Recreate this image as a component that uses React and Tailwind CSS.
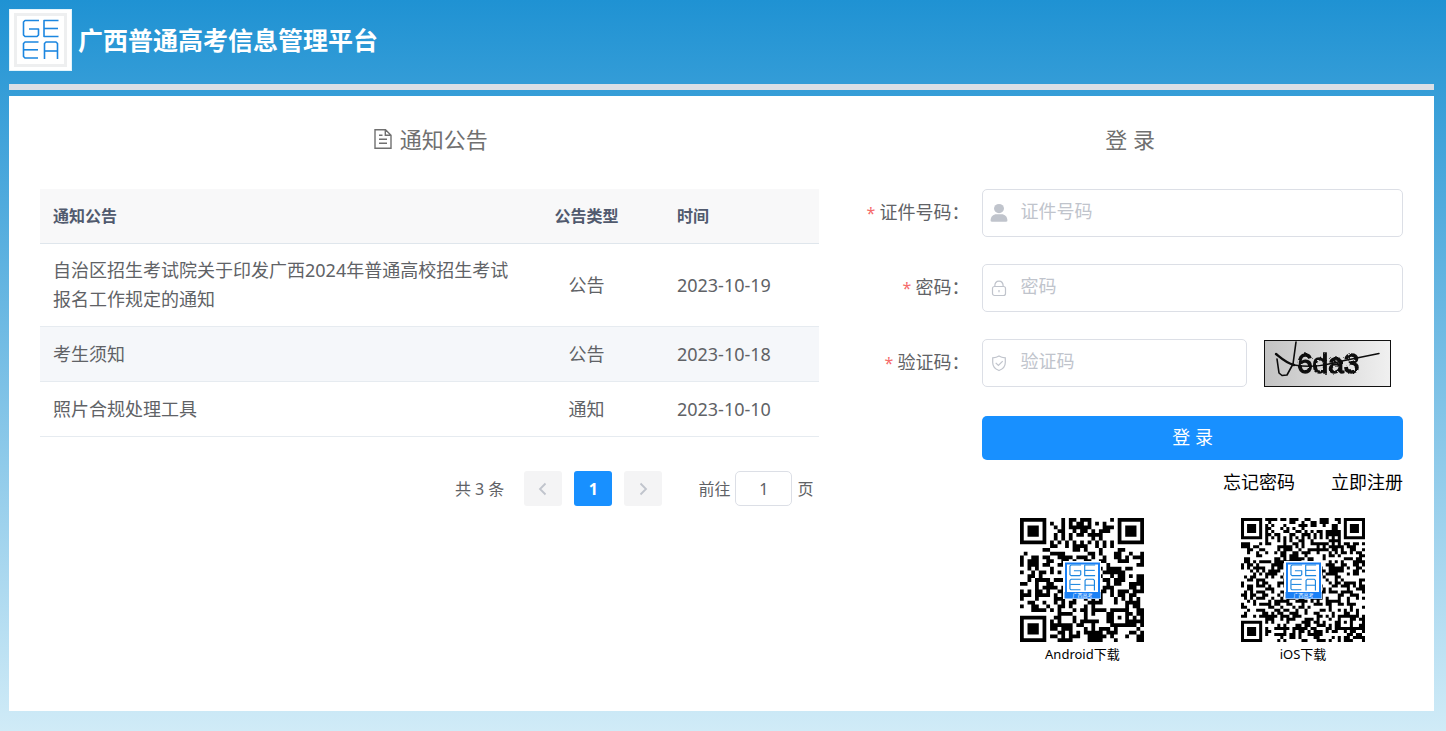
import { useState } from "react";

const NOTICES = [
  {
    title: "自治区招生考试院关于印发广西2024年普通高校招生考试报名工作规定的通知",
    type: "公告",
    date: "2023-10-19",
  },
  { title: "考生须知", type: "公告", date: "2023-10-18" },
  { title: "照片合规处理工具", type: "通知", date: "2023-10-10" },
];

// Strokes of the GEEA mark, shared by the header logo and the QR badges
function Mark() {
  return (
    <g fill="none" stroke="#1b86e0" strokeWidth="1.6" strokeLinejoin="round">
      <polyline points="30,11.5 16,11.5 14.5,13 14.5,26 16,27.5 28,27.5 29.5,26 29.5,20 20,20" />
      <polyline points="49.5,11.5 35,11.5 35,27.5 49.5,27.5" />
      <line x1="35" y1="19.5" x2="49" y2="19.5" />
      <polyline points="29.5,33 16,33 14.5,34.5 14.5,47.5 16,49 29,49" />
      <line x1="15" y1="40.8" x2="29" y2="40.8" />
      <polyline points="35.5,50 35.5,34.5 37,33 47,33 48.5,34.5 48.5,50" />
      <line x1="35.5" y1="42" x2="48.5" y2="42" />
    </g>
  );
}

function Logo() {
  return (
    <svg viewBox="0 0 63 62" className="h-[62px] w-[63px] shrink-0" aria-hidden="true">
      <rect width="63" height="62" fill="#fff" />
      <rect x="0.5" y="0.5" width="62" height="61" fill="none" stroke="#e3f4fb" />
      <rect x="6.5" y="5.5" width="50" height="51" fill="none" stroke="#eeeff0" strokeWidth="3" />
      <Mark />
    </svg>
  );
}

function finderAt(x, y, fx, fy) {
  const dx = x - fx;
  const dy = y - fy;
  if (dx < -1 || dy < -1 || dx > 7 || dy > 7) return null;
  const ring = Math.max(Math.abs(dx - 3), Math.abs(dy - 3));
  return ring === 3 || ring <= 1;
}

function buildModules(size, seed) {
  let s = seed;
  const next = () => {
    s = (s * 1103515245 + 12345) % 2147483648;
    return s / 2147483648;
  };
  let d = "";
  for (let y = 0; y < size; y++) {
    for (let x = 0; x < size; x++) {
      let on = next() > 0.49;
      if (x === 6) on = y % 2 === 0;
      if (y === 6) on = x % 2 === 0;
      // alignment pattern
      const a = Math.max(Math.abs(x - (size - 7)), Math.abs(y - (size - 7)));
      if (a <= 2) on = a !== 1;
      const f =
        finderAt(x, y, 0, 0) ?? finderAt(x, y, size - 7, 0) ?? finderAt(x, y, 0, size - 7);
      if (f !== null) on = f;
      if (on) d += `M${x} ${y}h1v1h-1z`;
    }
  }
  return d;
}

const ANDROID_MODULES = buildModules(33, 20231);
const IOS_MODULES = buildModules(41, 77123);

function QrCode({ size, modules, label }) {
  return (
    <figure className="flex flex-col items-center">
      <svg viewBox="0 0 124 124" className="size-[124px]" role="img" aria-label={label}>
        <path d={modules} transform={`scale(${124 / size})`} fill="#000" />
        <rect x="43" y="43" width="38" height="38" fill="#fff" />
        <rect x="46" y="45.5" width="33" height="33" fill="#fff" stroke="#1a80f5" strokeWidth="2" />
        <g transform="translate(39.5 39.5) scale(0.72 0.66)">
          <Mark />
        </g>
        <rect x="44.5" y="74" width="36" height="6.5" fill="#1a80f5" />
        <text x="62.5" y="79" fontSize="5" fill="#fff" textAnchor="middle">
          广西高考
        </text>
      </svg>
      <figcaption className="mt-[2px] text-[13px] leading-5 text-black">{label}</figcaption>
    </figure>
  );
}

function Captcha() {
  return (
    <svg
      viewBox="0 0 127 47"
      className="h-[47px] w-[127px]"
      fontFamily="Liberation Sans, sans-serif"
    >
      <defs>
        <linearGradient id="captcha-bg" x1="0" x2="1" y1="0" y2="0">
          <stop offset="0" stopColor="#c3c3c3" />
          <stop offset="1" stopColor="#f0f0f0" />
        </linearGradient>
        <filter id="captcha-soft">
          <feTurbulence type="fractalNoise" baseFrequency="0.25" numOctaves="2" result="n" />
          <feDisplacementMap in="SourceGraphic" in2="n" scale="3" result="d" />
          <feGaussianBlur in="d" stdDeviation="0.5" />
        </filter>
      </defs>
      <rect x="0.5" y="0.5" width="126" height="46" fill="url(#captcha-bg)" stroke="#111" />
      <text
        x="33"
        y="33"
        fontSize="28"
        fill="#0c0c0c"
        stroke="#0c0c0c"
        strokeWidth="1.4"
        filter="url(#captcha-soft)"
      >
        6da3
      </text>
      <g fill="none" stroke="#0c0c0c" strokeLinecap="round" strokeLinejoin="round">
        <path d="M12 14C17 18 22 23 30 25" strokeWidth="2.4" />
        <path d="M30 25C50 28 62 25 78 21L115 13.5" strokeWidth="1.5" />
        <path d="M13 19L15 33L18 35.5L23 35L29 24L32 2" strokeWidth="1.6" />
      </g>
    </svg>
  );
}

function DocumentIcon() {
  return (
    <svg viewBox="0 0 18 20" className="h-5 w-[18px]" fill="none" stroke="currentColor" strokeWidth="1.4">
      <path d="M1 .8h10.500L17 6.300V19.200H1zM11.300 1v5.200H17M5 6.300h3.500M5 10.300h8M5 14.300h8" />
    </svg>
  );
}

function UserIcon() {
  return (
    <svg viewBox="0 0 18 18" className="size-[18px]" fill="currentColor">
      <ellipse cx="9" cy="4.600" rx="5" ry="4.600" />
      <path d="M.6 16.500c0-4 2.500-6.300 6-6.300h4.800c3.500 0 6 2.300 6 6.300 0 .8-.5 1.200-1.200 1.200H1.800C1.100 17.700.6 17.300.6 16.500z" />
    </svg>
  );
}

function LockIcon() {
  return (
    <svg viewBox="0 0 18 18" className="size-[18px]" fill="none" stroke="currentColor" strokeWidth="1.2">
      <rect x="2.500" y="7.500" width="13" height="9" rx="2" />
      <path d="M4.800 7.300C4.800 4 6.500 2.200 9 2.200S13.200 4 13.200 7.300M9 11v2.200" />
    </svg>
  );
}

function ShieldIcon() {
  return (
    <svg viewBox="0 0 18 18" className="size-[18px]" fill="none" stroke="currentColor" strokeWidth="1.2">
      <path d="M9 2C7.200 3.200 5 3.700 2.700 3.800V8.500c0 4 2.300 6.500 6.300 8 4-1.500 6.300-4 6.300-8V3.800C13 3.700 10.800 3.200 9 2z" />
      <path d="M5.700 8.800l2.700 2.700 4.300-4.300" />
    </svg>
  );
}

function Chevron({ flip }) {
  return (
    <svg
      viewBox="0 0 16 16"
      className={flip ? "size-4 rotate-180" : "size-4"}
      fill="none"
      stroke="currentColor"
      strokeWidth="1.8"
    >
      <path d="M10.500 2.500L5 8l5.500 5.500" />
    </svg>
  );
}

function Field({ id, label, type = "text", icon, children }) {
  return (
    <div className="flex">
      <label
        htmlFor={id}
        className="w-[125px] shrink-0 pr-[13px] text-right text-lg leading-[46px] whitespace-nowrap text-[#606266]"
      >
        <span className="mr-1 text-base text-[#f56c6c]">*</span>
        {label}：
      </label>
      <div className="relative min-w-0 flex-1">
        <input
          id={id}
          type={type}
          placeholder={label}
          className="h-12 w-full rounded-[5px] border border-[#dcdfe6] bg-white pb-1 pl-[37px] text-lg text-[#606266] outline-none placeholder:text-[#c0c4cc]"
        />
        <span className="absolute inset-y-0 left-2 flex items-center text-[#c0c4cc]">{icon}</span>
      </div>
      {children}
    </div>
  );
}

function NoticeTable() {
  return (
    <table className="w-full table-fixed border-separate border-spacing-0 text-left text-[#606266]">
      <thead className="bg-[#f8f8f9] text-base text-[#515a6e]">
        <tr>
          <th className="h-[55px] w-[62%] border-b border-[#dfe6ec] pl-[13px]">通知公告</th>
          <th className="w-[16%] border-b border-[#dfe6ec] pl-[2px] text-center">公告类型</th>
          <th className="border-b border-[#dfe6ec] pl-[29px]">时间</th>
        </tr>
      </thead>
      <tbody className="text-lg leading-[29px]">
        {NOTICES.map((n) => (
          <tr key={n.date} className="even:bg-[#f5f7fa]">
            <td className="h-[55px] border-b border-[#e6ebf0] py-3 pl-[13px]">{n.title}</td>
            <td className="border-b border-[#e6ebf0] pl-[2px] text-center">{n.type}</td>
            <td className="border-b border-[#e6ebf0] pl-[29px]">{n.date}</td>
          </tr>
        ))}
      </tbody>
    </table>
  );
}

function Pagination() {
  const [page, setPage] = useState("1");

  return (
    <div className="mt-[34px] flex items-center justify-end pr-[6px] text-base text-[#606266]">
      <span className="mr-5">共 3 条</span>
      <div className="flex gap-3">
        <button
          disabled
          aria-label="上一页"
          className="flex h-[35px] w-[38px] items-center justify-center rounded-[3px] bg-[#f4f4f5] text-[#c0c4cc]"
        >
          <Chevron />
        </button>
        <button className="h-[35px] w-[38px] rounded-[3px] bg-[#1890ff] font-bold text-white">1</button>
        <button
          disabled
          aria-label="下一页"
          className="flex h-[35px] w-[38px] items-center justify-center rounded-[3px] bg-[#f4f4f5] text-[#c0c4cc]"
        >
          <Chevron flip />
        </button>
      </div>
      <label htmlFor="jump" className="ml-9">
        前往
      </label>
      <input
        id="jump"
        value={page}
        onChange={(e) => setPage(e.target.value)}
        className="mx-[5px] h-[35px] w-[57px] rounded-[5px] border border-[#dcdfe6] text-center outline-none"
      />
      <span>页</span>
    </div>
  );
}

export default function App() {
  return (
    <div className="min-h-screen bg-linear-to-b/srgb from-[#1f92d3] to-[#d0ebf7] pt-[9px] pr-3 pb-5 pl-[9px] font-['Noto_Sans','Noto_Sans_CJK_SC',sans-serif]">
      <header className="flex items-center gap-[6px]">
        <Logo />
        <h1 className="pt-[2px] text-[25px] font-bold text-white">广西普通高考信息管理平台</h1>
      </header>

      <div className="mt-[13px] mb-[6px] h-[6px] bg-[#dadfe6]" />

      <main className="grid grid-cols-[10fr_7fr] gap-[38px] bg-white px-[31px] pt-[27px] pb-[47px]">
        <section>
          <h2 className="mb-[34px] flex items-center justify-center gap-2 pl-[2px] text-[22px] leading-8 text-[#707070]">
            <DocumentIcon />
            通知公告
          </h2>
          <NoticeTable />
          <Pagination />
        </section>

        <section>
          <h2 className="mb-[34px] text-center text-[22px] leading-8 text-[#707070]">登 录</h2>
          <form className="flex flex-col gap-[27px]" onSubmit={(e) => e.preventDefault()}>
            <Field id="card" label="证件号码" icon={<UserIcon />} />
            <Field id="password" label="密码" type="password" icon={<LockIcon />} />
            <Field id="code" label="验证码" icon={<ShieldIcon />}>
              <button type="button" aria-label="刷新验证码" className="mr-3 ml-[17px] shrink-0">
                <Captcha />
              </button>
            </Field>
            <div className="mt-[2px] pl-[125px]">
              <button
                type="submit"
                className="h-11 w-full rounded-[5px] bg-[#1890ff] pb-[2px] text-lg text-white"
              >
                登 录
              </button>
              <div className="mt-2 flex justify-end gap-9 text-lg text-black">
                <a href="#forgot">忘记密码</a>
                <a href="#register">立即注册</a>
              </div>
              <div className="mt-[22px] flex justify-between px-[38px]">
                <QrCode size={33} modules={ANDROID_MODULES} label="Android下载" />
                <QrCode size={41} modules={IOS_MODULES} label="iOS下载" />
              </div>
            </div>
          </form>
        </section>
      </main>
    </div>
  );
}
